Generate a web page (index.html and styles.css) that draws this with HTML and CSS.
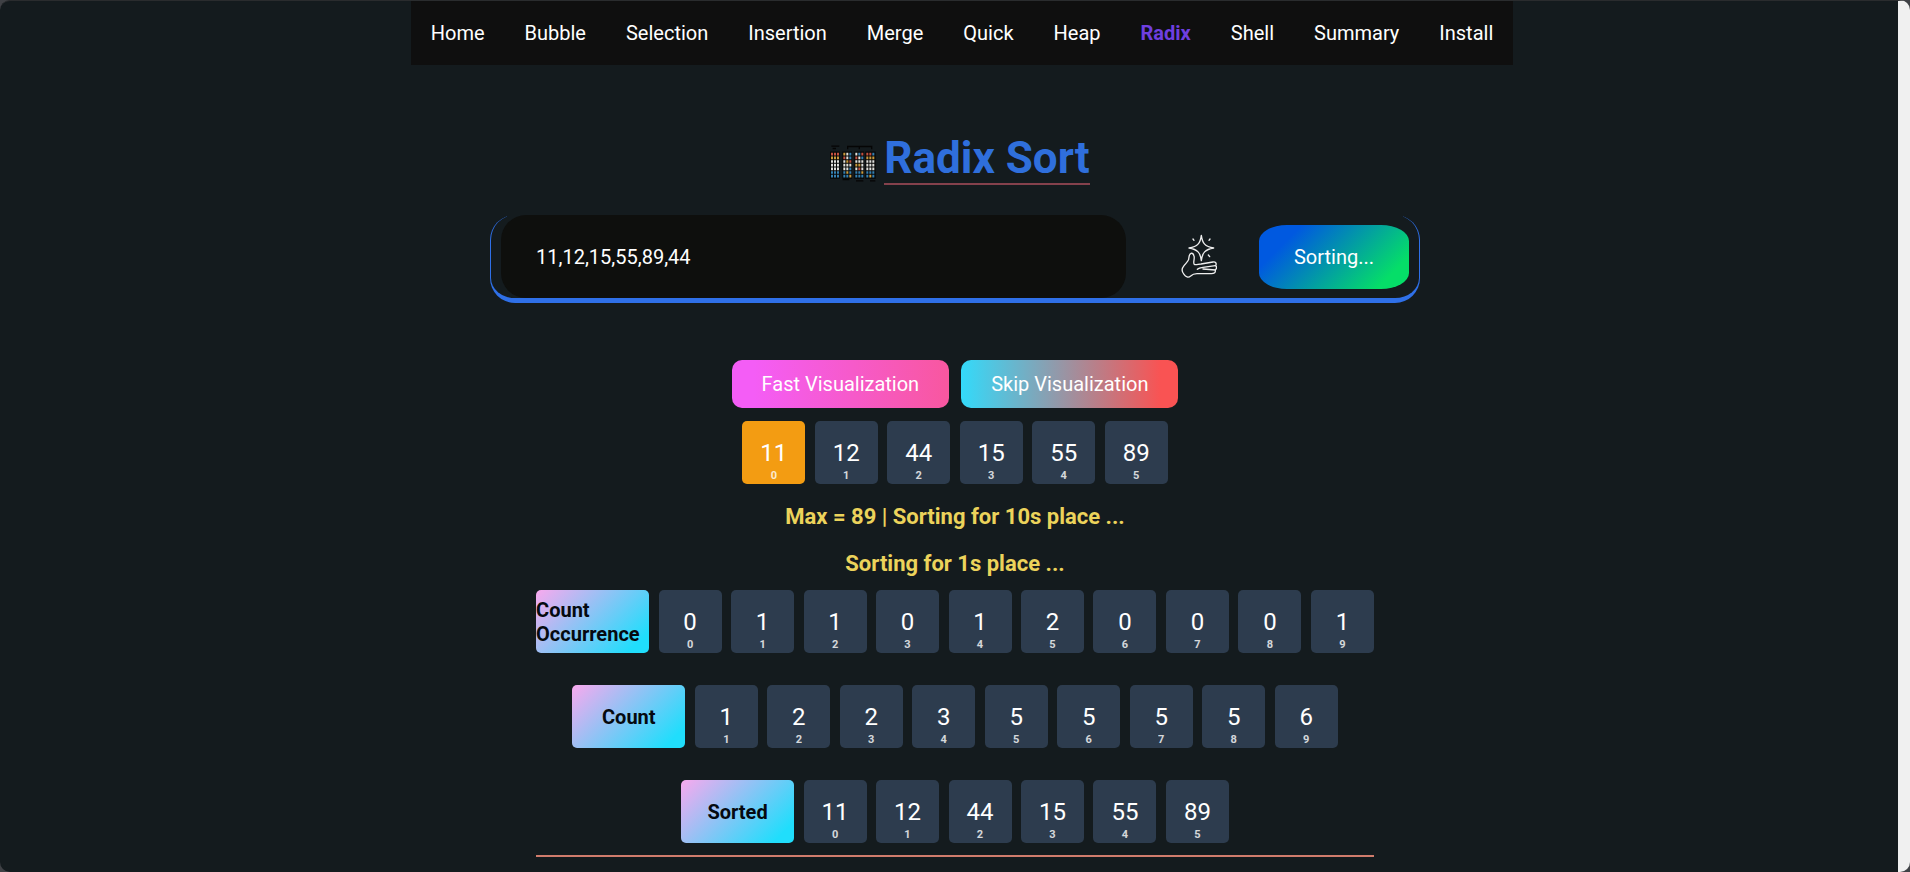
FILE: index.html
```html
<!DOCTYPE html>
<html lang="en">
  <head>
    <meta charset="UTF-8" />
    <meta name="viewport" content="width=device-width, initial-scale=1.0" />
    <title>Radix Sort</title>
    <link rel="stylesheet" href="styles.css">
  </head>
  <body>
    <div class="page">
      <header>
        <nav>
          <a href="#">Home</a>
          <a href="#">Bubble</a>
          <a href="#">Selection</a>
          <a href="#">Insertion</a>
          <a href="#">Merge</a>
          <a href="#">Quick</a>
          <a href="#">Heap</a>
          <a href="#" class="active">Radix</a>
          <a href="#">Shell</a>
          <a href="#">Summary</a>
          <a href="#">Install</a>
        </nav>
      </header>
      <main>
        <div class="title">
          <svg class="logo" viewBox="0 0 138 110" aria-hidden="true">
            <path d="M4 3h24M8 10h10M53 12V4h72v8M88 4v8M38 103h20M78 107h22M120 107h16" fill="none" stroke="#050505" stroke-width="4" />
            <g fill="#070808">
              <rect x="0" y="19" width="29" height="82" />
              <rect x="37" y="19" width="29" height="82" />
              <rect x="73" y="19" width="29" height="82" />
              <rect x="106" y="19" width="31" height="82" />
            </g>
            <g fill="none" stroke-width="8" stroke-dasharray="6 3">
              <path d="M3 27h24M40 38h6M76 38h6M94 27h6M109 27h15M58 49h6M85 71h6" stroke="#c2503f" />
              <path d="M3 38h24M40 27h6M49 49h6M49 82h6M58 93h6M76 60h6M85 60h6M94 82h6M109 38h24M118 93h6" stroke="#c99a3d" />
              <path d="M3 49h24M3 60h24M3 71h24M49 27h6M49 38h6M40 49h6M40 60h24M40 71h15M76 27h6M85 38h6M76 49h24M94 60h6M76 71h6M94 71h6M109 49h24M109 60h24M109 71h24" stroke="#e0e0dc" />
              <path d="M3 82h24M3 93h24M58 27h6M58 38h6M58 71h6M40 82h6M58 82h6M40 93h15M85 27h6M94 38h6M76 82h15M76 93h24M127 27h6M109 82h24M109 93h6M127 93h6" stroke="#347fb0" />
            </g>
          </svg>
          <h1>Radix Sort</h1>
        </div>
        <form class="sort-form">
          <input type="text" value="11,12,15,55,89,44" aria-label="Numbers to sort" />
          <button type="button" class="random-btn" aria-label="Random numbers">
            <svg viewBox="0 0 108 135" aria-hidden="true">
              <g fill="none" stroke="#eeeeee" stroke-width="4" stroke-linejoin="round" stroke-linecap="round">
                <path d="M61 4C64 28 72 38 98 42C72 46 64 56 61 80C58 56 50 46 24 42C50 38 58 28 61 4Z" />
                <path d="M36 15l3 4M87 15l-3 4M82 63l4 5" />
                <path d="M30 58C24 60 24 68 23 76C21 83 14 88 7 98C1 106 3 114 9 121C14 129 22 132 29 126C34 121 39 119 48 119H91C100 119 104 115 103 108C107 104 107 98 104 95C108 87 103 83 96 84L60 90C52 90 45 94 40 91C35 88 42 73 39 66C37 59 34 57 30 58Z" />
                <path d="M103 95L66 100C58 101 53 102 49 106M103 108L66 105" />
              </g>
            </svg>
          </button>
          <button type="button" class="sort-btn">Sorting...</button>
        </form>
        <div class="controls">
          <button type="button" class="fast-btn">Fast Visualization</button>
          <button type="button" class="skip-btn">Skip Visualization</button>
        </div>
        <div class="array">
          <div class="box current">11<span>0</span></div>
          <div class="box">12<span>1</span></div>
          <div class="box">44<span>2</span></div>
          <div class="box">15<span>3</span></div>
          <div class="box">55<span>4</span></div>
          <div class="box">89<span>5</span></div>
        </div>
        <p class="status">Max = 89 | Sorting for 10s place ...</p>
        <section class="steps">
          <p class="status">Sorting for 1s place ...</p>
          <div class="array">
            <div class="label"><b>Count Occurrence</b></div>
            <div class="box">0<span>0</span></div>
            <div class="box">1<span>1</span></div>
            <div class="box">1<span>2</span></div>
            <div class="box">0<span>3</span></div>
            <div class="box">1<span>4</span></div>
            <div class="box">2<span>5</span></div>
            <div class="box">0<span>6</span></div>
            <div class="box">0<span>7</span></div>
            <div class="box">0<span>8</span></div>
            <div class="box">1<span>9</span></div>
          </div>
          <div class="array">
            <div class="label"><b>Count</b></div>
            <div class="box">1<span>1</span></div>
            <div class="box">2<span>2</span></div>
            <div class="box">2<span>3</span></div>
            <div class="box">3<span>4</span></div>
            <div class="box">5<span>5</span></div>
            <div class="box">5<span>6</span></div>
            <div class="box">5<span>7</span></div>
            <div class="box">5<span>8</span></div>
            <div class="box">6<span>9</span></div>
          </div>
          <div class="array">
            <div class="label"><b>Sorted</b></div>
            <div class="box">11<span>0</span></div>
            <div class="box">12<span>1</span></div>
            <div class="box">44<span>2</span></div>
            <div class="box">15<span>3</span></div>
            <div class="box">55<span>4</span></div>
            <div class="box">89<span>5</span></div>
          </div>
        </section>
      </main>
    </div>
  </body>
</html>
```

FILE: styles.css
```css
* {
  box-sizing: border-box;
}
html {
  background: #3f4145;
}
body {
  margin: 0;
  font-family: Roboto, sans-serif;
  font-size: 20px;
  color: white;
}
button,
input {
  font: inherit;
  color: inherit;
  border: none;
}
button {
  cursor: pointer;
  padding: 0;
}
h1,
p {
  margin: 0;
}
.page {
  min-height: 100vh;
  padding-left: 12px;
  background: #141b1e;
  border-top: 1px solid #2a2c2e;
  border-right: 12px solid #f0f0f0;
  border-radius: 10px;
}
header {
  padding-left: 14px;
}
nav {
  display: flex;
  width: fit-content;
  margin: 0 auto;
  background: #0f0f0f;
}
nav a {
  padding: 20px;
  line-height: 24px;
  color: white;
  text-decoration: none;
}
nav a.active {
  color: #6f3fe0;
  font-weight: bold;
}
main {
  display: flex;
  flex-direction: column;
  align-items: center;
}
.title {
  display: flex;
  align-items: center;
  gap: 8px;
  margin-top: 68px;
  padding-left: 10px;
}
.logo {
  width: 46px;
  height: 37px;
  margin-top: 8px;
}
h1 {
  font-size: 44px;
  line-height: 50px;
  color: #2f6fdc;
  border-bottom: 2px solid #84414c;
}
.sort-form {
  display: flex;
  align-items: center;
  width: 930px;
  max-width: 100%;
  margin-top: 30px;
  padding: 0 10px;
  border: 1px solid #2f70e8;
  border-top: none;
  border-bottom-width: 5px;
  border-radius: 25px;
}
.sort-form input {
  flex: 1;
  height: 83px;
  padding: 0 35px;
  background: #0e0f0d;
  border-radius: 25px;
  outline: none;
}
.random-btn {
  width: 133px;
  padding: 4px 0 0 12px;
  background: none;
}
.random-btn svg {
  width: 36px;
  height: 45px;
}
.sort-btn {
  width: 150px;
  height: 64px;
  background: linear-gradient(135deg, #0059e0 20%, #05de68 85%);
  border-radius: 28px / 16px;
}
.controls {
  display: flex;
  gap: 12px;
  margin: 57px 0 13px;
}
.controls button {
  height: 48px;
  padding: 0 30px;
  border-radius: 10px;
}
.fast-btn {
  background: linear-gradient(90deg, #f45df6 10%, #f8579f);
}
.skip-btn {
  background: linear-gradient(90deg, #33dafa, #f95353 92%);
}
.array {
  font-size: 14px;
  text-align: center;
}
.box,
.label {
  display: inline-flex;
  align-items: center;
  justify-content: center;
  height: 63px;
  margin: 0 3px;
  border-radius: 5px;
  vertical-align: top;
}
.box {
  position: relative;
  width: 63px;
  background: #2d3c4e;
  font-size: 24px;
}
.box.current {
  background: #f39c12;
}
.box span {
  position: absolute;
  bottom: 2px;
  width: 100%;
  font-size: 11px;
  font-weight: bold;
  line-height: 12px;
  opacity: 0.8;
}
.label {
  width: 113px;
  background: linear-gradient(135deg, #f9a9ee, #20defc 88%);
  color: #050a10;
  font-size: 20px;
  line-height: 24px;
  text-align: left;
}
.status {
  margin-top: 20px;
  font-size: 22px;
  font-weight: bold;
  line-height: 26px;
  text-align: center;
  color: #ecd35b;
}
.steps {
  padding-bottom: 12px;
  border-bottom: 2px solid #d07c6c;
}
.steps .status {
  margin-top: 21px;
}
.steps .array {
  margin: 32px -3px 0;
}
.steps .status + .array {
  margin-top: 13px;
}
```
